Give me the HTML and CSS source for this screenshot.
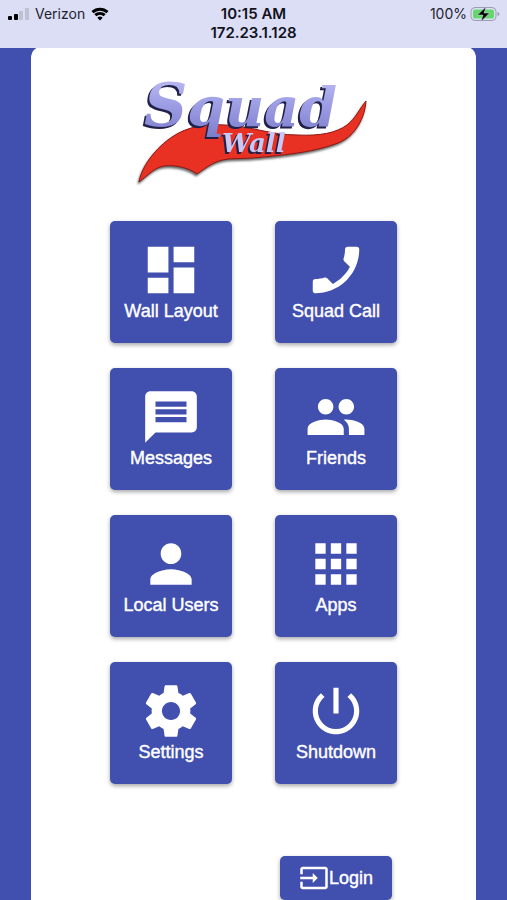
FILE: index.html
```html
<!DOCTYPE html>
<html lang="en">
<head>
  <meta charset="UTF-8">
  <meta name="viewport" content="width=device-width, initial-scale=1.0">
  <title>Squad Wall</title>
  <link rel="stylesheet" href="styles.css">
</head>
<body>
  <!-- Status bar -->
  <header class="status-bar">
    <div class="status-left">
      <svg class="signal" viewBox="0 0 22 14" aria-hidden="true">
        <rect x="1" y="9" width="4" height="4" rx="1"/>
        <rect x="7" y="7" width="4" height="6" rx="1"/>
        <rect class="off" x="12" y="4" width="4" height="9" rx="1"/>
        <rect class="off" x="18" y="1" width="4" height="12" rx="1"/>
      </svg>
      <span>Verizon</span>
      <svg class="wifi" viewBox="0 0 18 14" aria-hidden="true">
        <path d="M1.500 5.200a11 11 0 0 1 15 0M4.300 8.200a7 7 0 0 1 9.400 0"/>
        <path class="dot" d="M9 13.500l-2.700-2.800a4 4 0 0 1 5.400 0z"/>
      </svg>
    </div>
    <div class="status-center">
      <div>10:15 AM</div>
      <div>172.23.1.128</div>
    </div>
    <div class="status-right">
      <span>100%</span>
      <svg class="battery" viewBox="0 0 30 16" aria-hidden="true">
        <rect x="1" y="1.500" width="25" height="13" rx="4" fill="none" stroke="#9a9fb0"/>
        <rect x="3" y="3.500" width="21" height="9" rx="2" fill="#65d66c"/>
        <path d="M27.500 6v4q2-.5 2-2t-2-2z" fill="#9a9fb0"/>
        <path d="M16 .8L7.500 9H13l-2 6.500L19.500 7H14z" fill="#000" stroke="#dcdff6" stroke-width=".5"/>
      </svg>
    </div>
  </header>

  <main class="card">
    <!-- Logo -->
    <svg class="logo" viewBox="0 0 240 104" role="img" aria-label="Squad Wall">
      <defs>
        <linearGradient id="letters" x1="0" y1="0" x2="0" y2="1">
          <stop offset="0" stop-color="#c3c4f5"/>
          <stop offset=".5" stop-color="#9c9de4"/>
          <stop offset="1" stop-color="#7a7bc8"/>
        </linearGradient>
      </defs>
      <path class="swoosh" d="M232 19C231 35 222 54 204 61C183 69 156 73 118 76L94 77C79 79 72 86 63 92C53 84 35 82 26 85C18 88 12 95 5 100C8 83 23 65 38 55C54 44 72 42 91 43C118 44 135 53 164 53C186 54 202 51 213 43C222 36 226 26 232 19Z"/>
      <text class="logo-squad" x="10" y="44" fill="url(#letters)"><tspan class="logo-initial">S</tspan>quad</text>
      <text class="logo-wall" x="88" y="70">Wall</text>
    </svg>

    <!-- Menu -->
    <nav class="menu">
      <button class="tile">
        <svg viewBox="0 0 24 24"><path d="M3 13h8V3H3v10zm0 8h8v-6H3v6zm10 0h8V11h-8v10zm0-18v6h8V3h-8z"/></svg>
        <span>Wall Layout</span>
      </button>
      <button class="tile">
        <svg viewBox="0 0 24 24"><path d="M17.380 10.790c-1.440 2.830-3.760 5.140-6.590 6.590l-2.200-2.200c-.27-.27-.67-.36-1.020-.24-1.120.37-2.330.57-3.570.57-.55 0-1 .45-1 1V20c0 .55.45 1 1 1 9.390 0 17-7.610 17-17 0-.55-.45-1-1-1h-3.500c-.55 0-1 .45-1 1 0 1.250-.2 2.450-.57 3.570-.11.35-.03.74.24 1.020l2.210 2.200z"/></svg>
        <span>Squad Call</span>
      </button>
      <button class="tile">
        <svg viewBox="0 0 24 24"><path d="M20 2H4c-1.100 0-1.990.9-1.990 2L2 22l4-4h14c1.100 0 2-.9 2-2V4c0-1.100-.9-2-2-2zm-2 12H6v-2h12v2zm0-3H6V9h12v2zm0-3H6V6h12v2z"/></svg>
        <span>Messages</span>
      </button>
      <button class="tile">
        <svg viewBox="0 0 24 24"><path d="M16 11c1.660 0 2.990-1.340 2.990-3S17.660 5 16 5c-1.660 0-3 1.340-3 3s1.340 3 3 3zm-8 0c1.660 0 2.990-1.340 2.990-3S9.660 5 8 5C6.340 5 5 6.340 5 8s1.340 3 3 3zm0 2c-2.330 0-7 1.170-7 3.500V19h14v-2.500c0-2.330-4.670-3.500-7-3.500zm8 0c-.29 0-.62.02-.97.05 1.160.84 1.970 1.970 1.970 3.450V19h6v-2.500c0-2.330-4.670-3.500-7-3.500z"/></svg>
        <span>Friends</span>
      </button>
      <button class="tile">
        <svg viewBox="0 0 24 24"><path d="M12 12c2.210 0 4-1.790 4-4s-1.790-4-4-4-4 1.790-4 4 1.790 4 4 4zm0 2c-2.670 0-8 1.340-8 4v2h16v-2c0-2.660-5.330-4-8-4z"/></svg>
        <span>Local Users</span>
      </button>
      <button class="tile">
        <svg viewBox="0 0 24 24"><path d="M4 8h4V4H4v4zm6 12h4v-4h-4v4zm-6 0h4v-4H4v4zm0-6h4v-4H4v4zm6 0h4v-4h-4v4zm6-10v4h4V4h-4zm-6 4h4V4h-4v4zm6 6h4v-4h-4v4zm0 6h4v-4h-4v4z"/></svg>
        <span>Apps</span>
      </button>
      <button class="tile">
        <svg viewBox="0 0 24 24"><path d="M19.430 12.980c.04-.32.07-.64.07-.98s-.03-.66-.07-.98l2.110-1.650c.19-.15.24-.42.12-.64l-2-3.460c-.12-.22-.39-.3-.61-.22l-2.490 1c-.52-.4-1.080-.73-1.690-.98l-.38-2.650C14.460 2.180 14.250 2 14 2h-4c-.25 0-.46.18-.49.42l-.38 2.650c-.61.25-1.170.59-1.690.98l-2.490-1c-.23-.09-.49 0-.61.22l-2 3.460c-.13.22-.07.49.12.64l2.110 1.650c-.04.32-.07.65-.07.98s.03.66.07.98l-2.110 1.650c-.19.15-.24.42-.12.64l2 3.460c.12.22.39.3.61.22l2.490-1c.52.4 1.080.73 1.690.98l.38 2.650c.03.24.24.42.49.42h4c.25 0 .46-.18.49-.42l.38-2.650c.61-.25 1.170-.59 1.690-.98l2.490 1c.23.09.49 0 .61-.22l2-3.460c.12-.22.07-.49-.12-.64l-2.110-1.650zM12 15.500c-1.930 0-3.500-1.570-3.500-3.500s1.570-3.500 3.500-3.500 3.500 1.570 3.500 3.500-1.570 3.500-3.500 3.500z"/></svg>
        <span>Settings</span>
      </button>
      <button class="tile">
        <svg viewBox="0 0 24 24"><path d="M13 3h-2v10h2V3zm4.830 2.170l-1.420 1.420C17.990 7.860 19 9.810 19 12c0 3.870-3.130 7-7 7s-7-3.130-7-7c0-2.190 1.010-4.140 2.580-5.420L6.170 5.170C4.230 6.820 3 9.260 3 12c0 4.970 4.030 9 9 9s9-4.030 9-9c0-2.740-1.230-5.180-3.170-6.830z"/></svg>
        <span>Shutdown</span>
      </button>
    </nav>

    <div class="actions">
      <button class="login">
        <svg viewBox="0 0 24 24"><path d="M21 3.010H3c-1.100 0-2 .9-2 2V9h2V4.990h18v14.030H3V15H1v4.010c0 1.100.9 1.980 2 1.980h18c1.100 0 2-.88 2-1.980v-14c0-1.110-.9-2-2-2zM11 16l4-4-4-4v3H1v2h10v3z"/></svg>
        <span>Login</span>
      </button>
    </div>
  </main>
</body>
</html>
```

FILE: styles.css
```css
:root {
  --primary-color: #414fae;
  --status-bg: #dcdef6;
  --card-bg: #fff;
}

* {
  box-sizing: border-box;
}

body {
  margin: 0;
  background-color: var(--primary-color);
  font-family: "Liberation Sans", Arial, sans-serif;
}

/* Status bar */
.status-bar {
  position: relative;
  z-index: 1;
  display: grid;
  grid-template-columns: 1fr auto 1fr;
  align-items: start;
  height: 48px;
  padding: 4px 7px 0 7px;
  background-color: var(--status-bg);
  color: #22232e;
  font-family: Inter, sans-serif;
  font-size: 14px;
  line-height: 19px;
}

.status-left,
.status-right {
  display: flex;
  align-items: center;
}

.status-left {
  gap: 6px;
}

.status-right {
  justify-content: flex-end;
  gap: 3px;
}

.status-center {
  color: #11121c;
  font-size: 15px;
  font-weight: 600;
  text-align: center;
}

.signal {
  width: 22px;
  height: 14px;
}

.signal .off {
  fill: #bec0d4;
}

.wifi {
  width: 18px;
  height: 14px;
  fill: none;
  stroke: #000;
  stroke-width: 3;
}

.wifi .dot {
  fill: #000;
  stroke: none;
}

.battery {
  width: 30px;
  height: 16px;
}

/* Card */
.card {
  display: flex;
  flex-direction: column;
  align-items: center;
  min-height: calc(100vh - 46px);
  margin: -2px 31px 0;
  padding-top: 36px;
  background-color: var(--card-bg);
  border-radius: 12px 12px 0 0;
}

/* Logo */
.logo {
  width: 240px;
  height: 104px;
  overflow: visible;
}

.swoosh {
  fill: #e93123;
  stroke: #8e1812;
  stroke-width: 1;
  filter: drop-shadow(-1px 2px 1px rgba(0, 0, 0, 0.6));
}

.logo-squad,
.logo-wall {
  font-family: "DejaVu Serif", serif;
  font-style: italic;
  font-weight: bold;
  filter: drop-shadow(-2px 2px 0 #20204a);
}

.logo-squad {
  font-size: 54px;
}

.logo-initial {
  font-size: 60px;
}

.logo-wall {
  fill: #c8c8f5;
  font-size: 26px;
}

/* Menu */
.menu {
  display: grid;
  grid-template-columns: repeat(2, 122px);
  gap: 25px 43px;
  margin-top: 35px;
}

button {
  border: none;
  border-radius: 5px;
  background-color: var(--primary-color);
  color: #fff;
  font-family: inherit;
  font-size: 18px;
  line-height: 20px;
  -webkit-text-stroke: 0.4px #fff;
  cursor: pointer;
  box-shadow: 0 2px 4px rgba(0, 0, 0, 0.35);
}

button svg {
  fill: currentColor;
}

.tile {
  display: flex;
  flex-direction: column;
  align-items: center;
  height: 122px;
  padding: 18px 0 0;
  white-space: nowrap;
}

.tile svg {
  width: 62px;
  height: 62px;
}

/* Login */
.actions {
  display: flex;
  justify-content: flex-end;
  width: 287px;
  margin-top: 72px;
  padding-right: 5px;
}

.login {
  display: flex;
  align-items: center;
  height: 44px;
  padding: 0 19px;
}

.login svg {
  width: 30px;
  height: 30px;
}
```
